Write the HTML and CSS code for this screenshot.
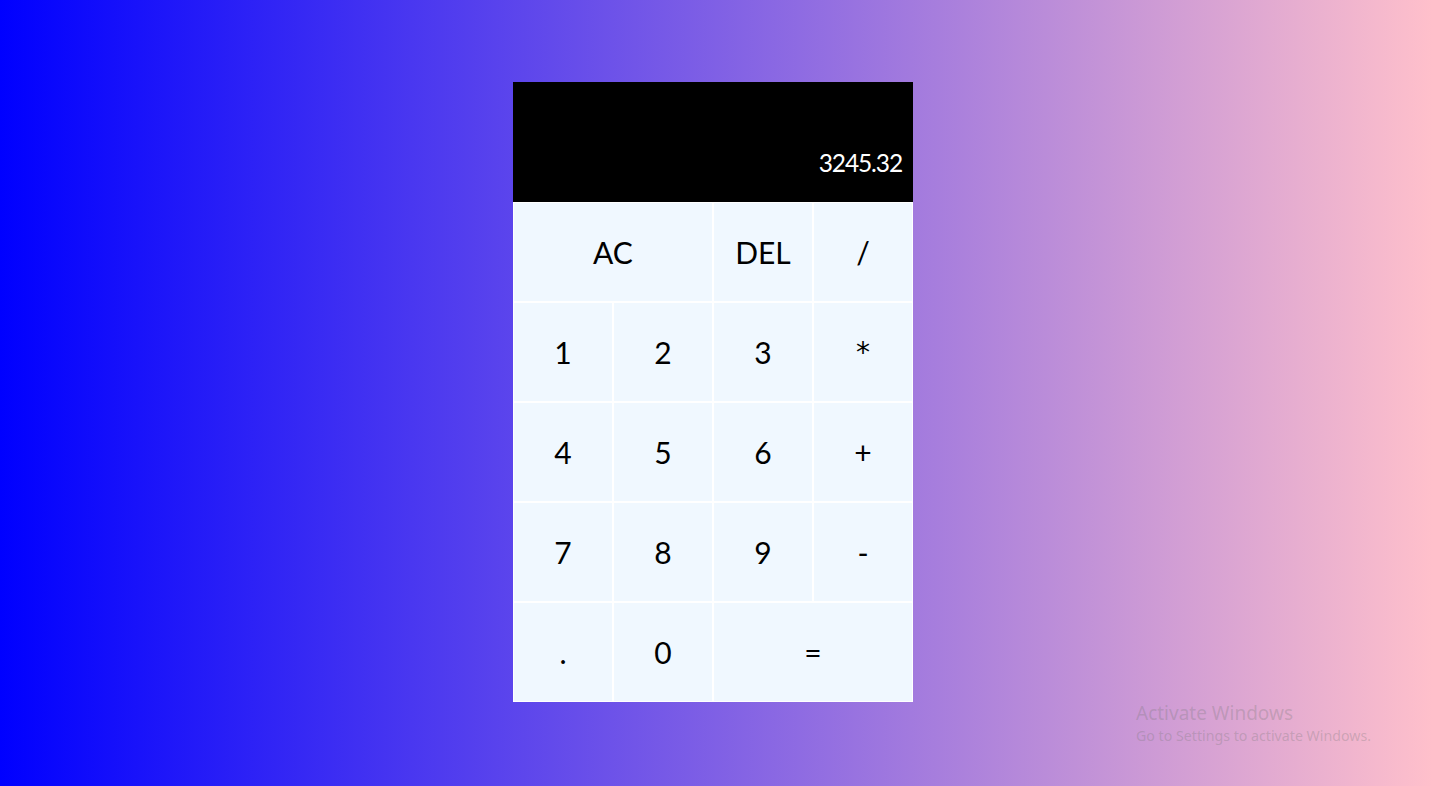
FILE: index.html
```html
<!DOCTYPE html>
<html>
<head>
<meta charset="utf-8">
<link rel="stylesheet" href="styles.css">
</head>
<body>
<div class="page">
  <div class="calculator">
    <div class="output">
      <div class="previous"></div>
      <div class="current">3245.32</div>
    </div>
    <button class="span-two">AC</button>
    <button>DEL</button>
    <button>/</button>
    <button>1</button>
    <button>2</button>
    <button>3</button>
    <button class="star">*</button>
    <button>4</button>
    <button>5</button>
    <button>6</button>
    <button>+</button>
    <button>7</button>
    <button>8</button>
    <button>9</button>
    <button>-</button>
    <button>.</button>
    <button>0</button>
    <button class="span-two">=</button>
  </div>
  <div class="watermark">
    <div class="wm-title">Activate Windows</div>
    <div class="wm-sub">Go to Settings to activate Windows.</div>
  </div>
</div>
</body>
</html>
```
FILE: styles.css
```css
* { box-sizing: border-box; }
html, body { margin: 0; padding: 0; }
body {
  width: 1433px;
  height: 786px;
  overflow: hidden;
  background: linear-gradient(to right, #0000ff, #ffc0cb);
  font-family: "Lato", "Open Sans", sans-serif;
}
.page {
  position: relative;
  height: 786px;
  display: flex;
  justify-content: flex-start;
  padding: 82px 0 0 513px;
}
.calculator {
  display: grid;
  grid-template-columns: repeat(4, 100px);
  grid-template-rows: 120px repeat(5, 100px);
  width: 400px;
  height: 620px;
}
.output {
  grid-column: 1 / -1;
  background: #000;
  display: flex;
  flex-direction: column;
  align-items: flex-end;
  justify-content: flex-end;
  padding: 10px 10px 27px;
  word-break: break-all;
}
.current {
  color: #fff;
  font-size: 24.5px;
  line-height: 25px;
  letter-spacing: -1.1px;
  margin-right: 1px;
}
button {
  font-family: inherit;
  font-size: 30px;
  color: #000;
  background: #f0f8ff;
  border: 1px solid #fff;
  outline: none;
  padding: 0;
  margin: 0;
  cursor: pointer;
}
.star {
  font-family: "DejaVu Sans", sans-serif;
  font-size: 28px;
}
.span-two { grid-column: span 2; }
.watermark {
  position: absolute;
  left: 1136px;
  top: 701px;
  font-family: "Noto Sans", "Open Sans", sans-serif;
  color: rgba(120, 120, 120, 0.3);
}
.wm-title { font-size: 19px; line-height: 24px; }
.wm-sub { font-size: 14.2px; line-height: 21px; }
```
